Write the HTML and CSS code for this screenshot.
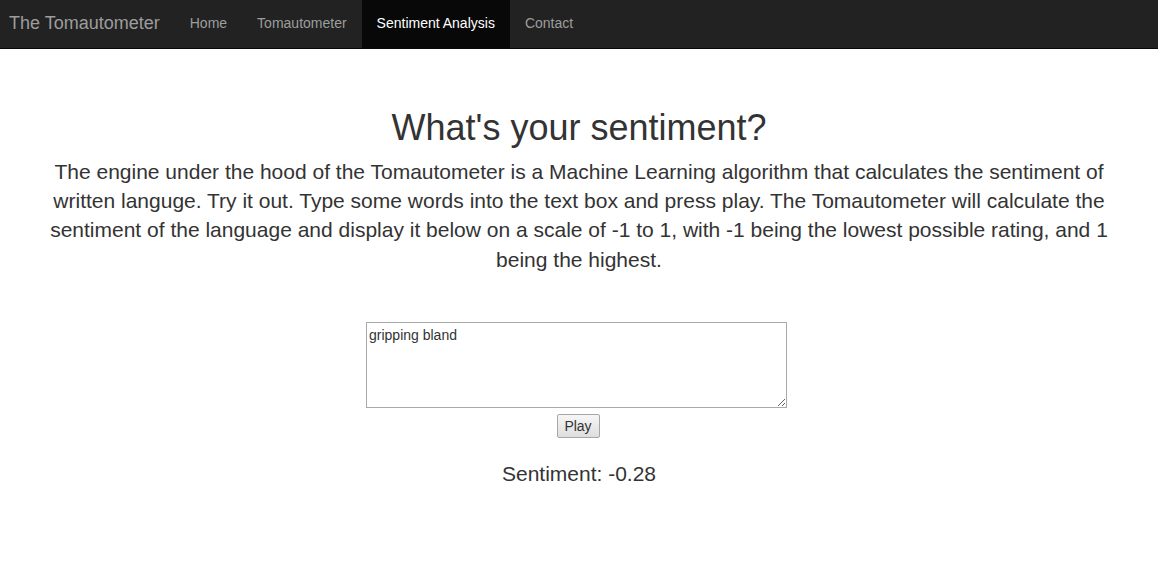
FILE: index.html
```html
<!DOCTYPE html>
<html>
<head>
<meta charset="utf-8">
<link rel="stylesheet" href="styles.css">
</head>
<body>
<nav class="navbar">
  <a class="brand" href="#">The Tomautometer</a>
  <ul class="nav">
    <li><a href="#">Home</a></li>
    <li><a href="#">Tomautometer</a></li>
    <li class="active"><a href="#">Sentiment Analysis</a></li>
    <li><a href="#">Contact</a></li>
  </ul>
</nav>
<main class="page">
  <h1 class="title">What's your sentiment?</h1>
  <p class="lead">The engine under the hood of the Tomautometer is a Machine Learning algorithm that calculates the sentiment of written languge. Try it out. Type some words into the text box and press play. The Tomautometer will calculate the sentiment of the language and display it below on a scale of -1 to 1, with -1 being the lowest possible rating, and 1 being the highest.</p>
  <form class="form">
    <textarea class="input">gripping bland</textarea>
    <button type="button" class="play">Play</button>
  </form>
  <p class="result">Sentiment: -0.28</p>
</main>
</body>
</html>
```
FILE: styles.css
```css
* { box-sizing: border-box; }
html, body { margin: 0; padding: 0; }
body {
  font-family: "Liberation Sans", Arial, Helvetica, sans-serif;
  font-size: 14px;
  line-height: 1.42857;
  color: #333;
  background: #fff;
}
.navbar {
  display: flex;
  align-items: stretch;
  height: 49px;
  background: #222;
  border-bottom: 1px solid #080808;
}
.brand {
  display: flex;
  align-items: center;
  padding: 0 15px 0 9px;
  font-size: 18px;
  color: #9d9d9d;
  text-decoration: none;
}
.nav {
  display: flex;
  list-style: none;
  margin: 0;
  padding: 0;
}
.nav li { display: flex; }
.nav a {
  display: flex;
  align-items: center;
  padding: 0 15px;
  color: #9d9d9d;
  text-decoration: none;
  font-size: 14px;
}
.nav .active a {
  background: #080808;
  color: #fff;
}
.page {
  padding: 59px 48px 0;
  text-align: center;
}
.title {
  margin: 0 0 9px;
  font-size: 36px;
  font-weight: 500;
  line-height: 1.1;
}
.lead {
  margin: 0;
  font-size: 21px;
  line-height: 1.4;
  font-weight: 300;
}
.form {
  display: flex;
  flex-direction: column;
  align-items: center;
  gap: 6px;
  margin-top: 48px;
}
.input {
  width: 421px;
  height: 86px;
  padding: 4px 2px 2px;
  margin: 0 5px 0 0;
  border: 1px solid #a9a9a9;
  font-family: "Liberation Sans", Arial, sans-serif;
  font-size: 14px;
  line-height: 1.2;
  color: #333;
  resize: both;
  display: block;
}
.play {
  width: 43px;
  height: 24px;
  padding: 0;
  margin-right: 2px;
  font-family: "Liberation Sans", Arial, sans-serif;
  font-size: 14px;
  color: #333;
  background: linear-gradient(#f6f6f6, #dedede);
  border: 1px solid #a6a6a6;
  border-radius: 2px;
}
.result {
  margin: 21px 0 0;
  font-size: 21px;
  line-height: 1.4;
}
```
